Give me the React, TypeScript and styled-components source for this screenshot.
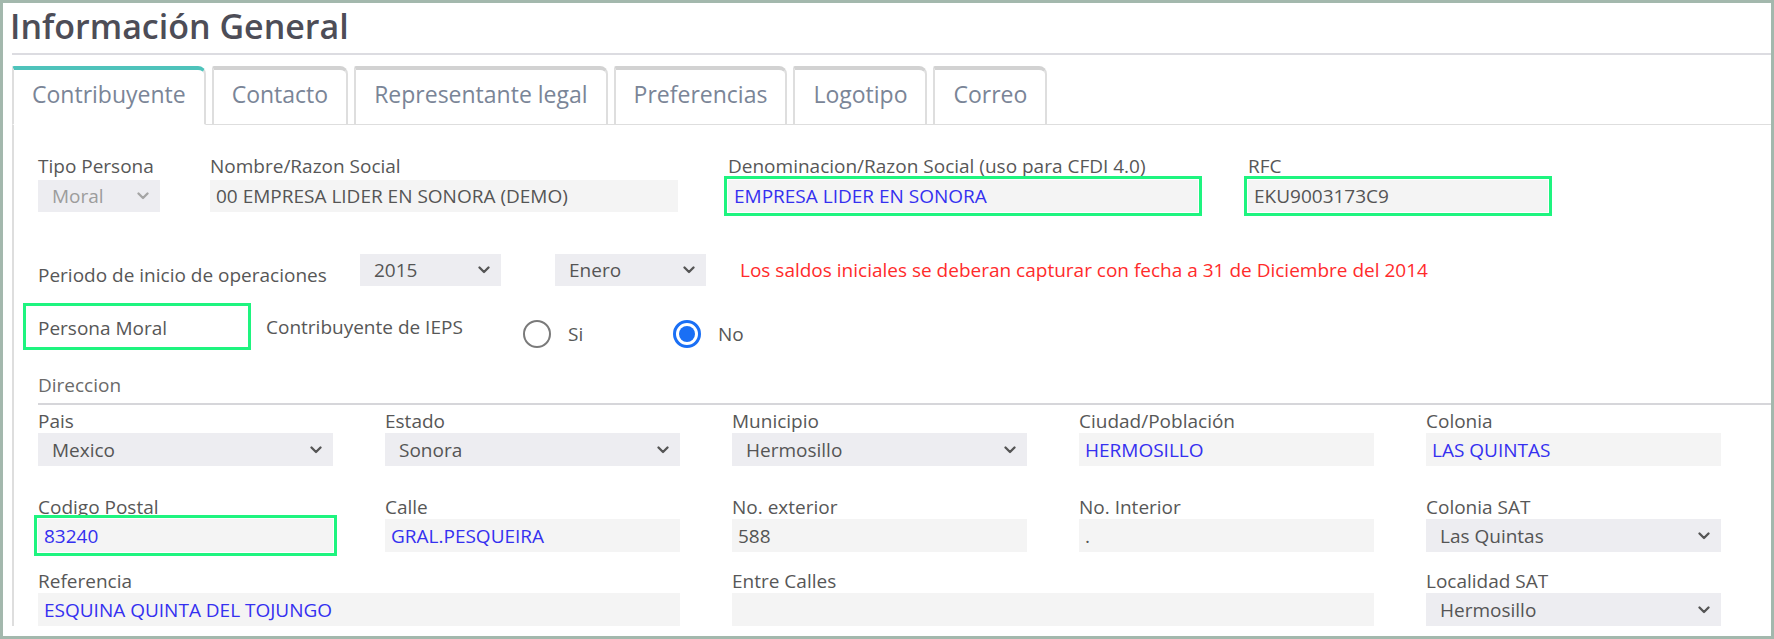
import React from "react";
import styled, { createGlobalStyle } from "styled-components";

const GlobalStyle = createGlobalStyle`
  html, body {
    margin: 0;
    padding: 0;
    background: #fff;
  }
  body {
    font-family: "Open Sans", "Noto Sans", sans-serif;
  }
`;

const colors = {
  frame: "#a3b8ad",
  line: "#dcdce1",
  tabBorder: "#dedede",
  teal: "#4ec3bb",
  label: "#575757",
  value: "#555",
  blue: "#3530f0",
  red: "#ff2b2b",
  mark: "#1ef47f",
  input: "#f4f4f4",
  select: "#ededf1",
};

const Frame = styled.div`
  width: 1774px;
  height: 639px;
  box-sizing: border-box;
  border: 3px solid ${colors.frame};
  background: #fff;
  overflow: hidden;
`;

const Title = styled.h1`
  margin: 0;
  padding: 3px 0 0 7px;
  height: 40px;
  font-size: 34px;
  font-weight: 600;
  line-height: 40px;
  color: #4d4d57;
`;

const Divider = styled.div`
  margin: 7px 0 0 9px;
  height: 2px;
  background: ${colors.line};
`;

const TabBar = styled.div`
  display: flex;
  align-items: flex-end;
  gap: 6px;
  height: 58px;
  margin: 11px 0 0 9px;
  border-bottom: 1px solid ${colors.tabBorder};
`;

const Tab = styled.div<{ $active?: boolean }>`
  box-sizing: border-box;
  height: 59px;
  margin-bottom: -1px;
  padding: 0 18px 6px;
  display: flex;
  align-items: center;
  background: #fff;
  border: 2px solid ${colors.tabBorder};
  border-top: 4px solid ${(p) => (p.$active ? colors.teal : "#d2d2d2")};
  border-bottom: 1px solid ${(p) => (p.$active ? "#fff" : colors.tabBorder)};
  border-radius: 2px 8px 0 0;
  font-size: 23px;
  color: #7a8597;
`;

const Panel = styled.div`
  margin-left: 9px;
  border-left: 2px solid ${colors.tabBorder};
  padding: 29px 0 0 24px;
`;

const TopRow = styled.div`
  display: flex;
  gap: 50px;
`;

const Field = styled.div<{ $width?: number; $span?: number }>`
  display: flex;
  flex-direction: column;
  width: ${(p) => (p.$width ? `${p.$width}px` : "auto")};
  grid-column: span ${(p) => p.$span || 1};
`;

const Label = styled.div`
  font-size: 19px;
  line-height: 24px;
  color: ${colors.label};
  white-space: nowrap;
`;

const TopLabel = styled(Label)`
  margin-bottom: 2px;
`;

const InputBox = styled.div<{ $blue?: boolean; $marked?: boolean; $h?: number }>`
  box-sizing: border-box;
  height: ${(p) => p.$h || 33}px;
  padding: 0 6px;
  display: flex;
  align-items: center;
  background: ${colors.input};
  font-size: 19px;
  color: ${(p) => (p.$blue ? colors.blue : colors.value)};
  white-space: nowrap;
  overflow: hidden;
  outline: ${(p) => (p.$marked ? `3px solid ${colors.mark}` : "none")};
  outline-offset: ${(p) => (p.$marked ? "1px" : "0")};
`;

const SelectBox = styled.div<{ $disabled?: boolean; $h?: number; $width?: number }>`
  box-sizing: border-box;
  height: ${(p) => p.$h || 33}px;
  width: ${(p) => (p.$width ? `${p.$width}px` : "auto")};
  flex-shrink: 0;
  padding: 0 11px 0 14px;
  display: flex;
  align-items: center;
  justify-content: space-between;
  background: ${colors.select};
  font-size: 19px;
  color: ${(p) => (p.$disabled ? "#9c9c9c" : colors.value)};
  white-space: nowrap;
`;

const PeriodRow = styled.div`
  display: flex;
  align-items: center;
  height: 32px;
  margin-top: 42px;
`;

const PeriodLabel = styled(Label)`
  width: 322px;
  padding-top: 9px;
`;

const Notice = styled.div`
  margin-left: 34px;
  font-size: 19px;
  color: ${colors.red};
  white-space: nowrap;
`;

const IepsRow = styled.div`
  display: flex;
  align-items: center;
  margin-top: 17px;
`;

const MarkedText = styled.div`
  box-sizing: border-box;
  width: 228px;
  height: 47px;
  margin-left: -15px;
  padding: 2px 0 0 12px;
  display: flex;
  align-items: center;
  border: 3px solid ${colors.mark};
  font-size: 19px;
  color: ${colors.label};
`;

const IepsLabel = styled(Label)`
  width: 257px;
  margin-left: 15px;
`;

const RadioGroup = styled.div`
  display: flex;
  margin-top: 14px;
`;

const RadioOption = styled.label<{ $width?: number }>`
  display: flex;
  align-items: center;
  gap: 17px;
  width: ${(p) => (p.$width ? `${p.$width}px` : "auto")};
  font-size: 19px;
  color: ${colors.label};
`;

const RadioCircle = styled.span<{ $checked?: boolean }>`
  box-sizing: border-box;
  width: 28px;
  height: 28px;
  border-radius: 50%;
  border: ${(p) => (p.$checked ? "3px solid #1a6ff5" : "2px solid #7a7a7a")};
  display: flex;
  align-items: center;
  justify-content: center;
  &::after {
    content: "";
    display: ${(p) => (p.$checked ? "block" : "none")};
    width: 16px;
    height: 16px;
    border-radius: 50%;
    background: #1a6ff5;
  }
`;

const SectionTitle = styled(Label)`
  margin-top: 23px;
  color: #6a6a6a;
`;

const Rule = styled.div`
  height: 2px;
  margin-top: 6px;
  background: #d6d6da;
`;

const AddressRow = styled.div<{ $top: number }>`
  display: grid;
  grid-template-columns: repeat(5, 295px);
  column-gap: 52px;
  margin-top: ${(p) => p.$top}px;
`;

const Chevron: React.FC<{ color?: string }> = ({ color = "#555" }) => (
  <svg width="12" height="8" viewBox="0 0 12 8">
    <path d="M1.5 1.5 L6 6 L10.5 1.5" stroke={color} strokeWidth="2.3" fill="none" strokeLinecap="round" strokeLinejoin="round" />
  </svg>
);

interface SelectProps {
  value: string;
  disabled?: boolean;
  height?: number;
  width?: number;
  style?: React.CSSProperties;
}

const Select: React.FC<SelectProps> = ({ value, disabled, height, width, style }) => (
  <SelectBox $disabled={disabled} $h={height} $width={width} style={style}>
    <span>{value}</span>
    <Chevron color={disabled ? "#a5a5a5" : "#555"} />
  </SelectBox>
);

const tabs = ["Contribuyente", "Contacto", "Representante legal", "Preferencias", "Logotipo", "Correo"];

const App: React.FC = () => {
  return (
    <>
      <GlobalStyle />
      <Frame>
        <Title>Información General</Title>
        <Divider />
        <TabBar>
          {tabs.map((t, i) => (
            <Tab key={t} $active={i === 0}>
              {t}
            </Tab>
          ))}
        </TabBar>
        <Panel>
          <TopRow>
            <Field $width={122}>
              <TopLabel>Tipo Persona</TopLabel>
              <Select value="Moral" disabled height={32} />
            </Field>
            <Field $width={468}>
              <TopLabel>Nombre/Razon Social</TopLabel>
              <InputBox $h={32}>00 EMPRESA LIDER EN SONORA (DEMO)</InputBox>
            </Field>
            <Field $width={470}>
              <TopLabel>Denominacion/Razon Social (uso para CFDI 4.0)</TopLabel>
              <InputBox $h={32} $blue $marked>EMPRESA LIDER EN SONORA</InputBox>
            </Field>
            <Field $width={300}>
              <TopLabel>RFC</TopLabel>
              <InputBox $h={32} $marked>EKU9003173C9</InputBox>
            </Field>
          </TopRow>

          <PeriodRow>
            <PeriodLabel>Periodo de inicio de operaciones</PeriodLabel>
            <Select value="2015" width={141} height={32} />
            <Select value="Enero" width={151} height={32} style={{ marginLeft: 54 }} />
            <Notice>Los saldos iniciales se deberan capturar con fecha a 31 de Diciembre del 2014</Notice>
          </PeriodRow>

          <IepsRow>
            <MarkedText>Persona Moral</MarkedText>
            <IepsLabel>Contribuyente de IEPS</IepsLabel>
            <RadioGroup>
              <RadioOption $width={150}>
                <RadioCircle />
                Si
              </RadioOption>
              <RadioOption>
                <RadioCircle $checked />
                No
              </RadioOption>
            </RadioGroup>
          </IepsRow>

          <SectionTitle>Direccion</SectionTitle>
          <Rule />

          <AddressRow $top={4}>
            <Field>
              <Label>Pais</Label>
              <Select value="Mexico" />
            </Field>
            <Field>
              <Label>Estado</Label>
              <Select value="Sonora" />
            </Field>
            <Field>
              <Label>Municipio</Label>
              <Select value="Hermosillo" />
            </Field>
            <Field>
              <Label>Ciudad/Población</Label>
              <InputBox $blue>HERMOSILLO</InputBox>
            </Field>
            <Field>
              <Label>Colonia</Label>
              <InputBox $blue>LAS QUINTAS</InputBox>
            </Field>
          </AddressRow>

          <AddressRow $top={29}>
            <Field>
              <Label>Codigo Postal</Label>
              <InputBox $blue $marked>83240</InputBox>
            </Field>
            <Field>
              <Label>Calle</Label>
              <InputBox $blue>GRAL.PESQUEIRA</InputBox>
            </Field>
            <Field>
              <Label>No. exterior</Label>
              <InputBox>588</InputBox>
            </Field>
            <Field>
              <Label>No. Interior</Label>
              <InputBox>.</InputBox>
            </Field>
            <Field>
              <Label>Colonia SAT</Label>
              <Select value="Las Quintas" />
            </Field>
          </AddressRow>

          <AddressRow $top={17}>
            <Field $span={2}>
              <Label>Referencia</Label>
              <InputBox $blue>ESQUINA QUINTA DEL TOJUNGO</InputBox>
            </Field>
            <Field $span={2}>
              <Label>Entre Calles</Label>
              <InputBox />
            </Field>
            <Field>
              <Label>Localidad SAT</Label>
              <Select value="Hermosillo" />
            </Field>
          </AddressRow>
        </Panel>
      </Frame>
    </>
  );
};

export default App;
